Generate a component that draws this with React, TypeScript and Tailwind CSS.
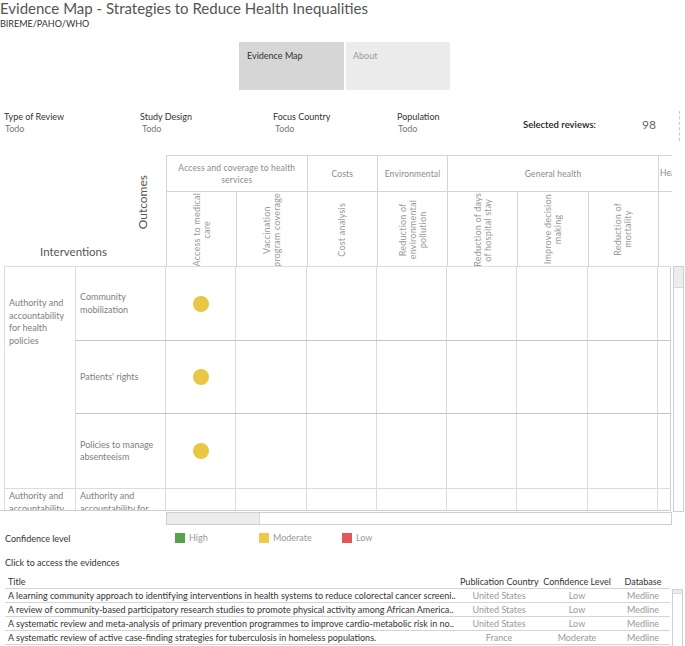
import React from "react";

const groups = [
  { label: ["Access and coverage to health", "services"], w: "w-[140.6px]" },
  { label: ["Costs"], w: "w-[70.3px]" },
  { label: ["Environmental"], w: "w-[70.3px]" },
  { label: ["General health"], w: "w-[210.9px]" },
];

const outcomes = [
  ["Access to medical", "care"],
  ["Vaccination", "program coverage"],
  ["Cost analysis"],
  ["Reduction of", "environmental", "pollution"],
  ["Reduction of days", "of hospital stay"],
  ["Improve decision", "making"],
  ["Reduction of", "mortality"],
];

const rows = [
  { label: ["Community", "mobilization"], h: "h-[74px]" },
  { label: ["Patients' rights"], h: "h-[73px]" },
  { label: ["Policies to manage", "absenteeism"], h: "h-[74px]" },
];

const evidences = [
  {
    title:
      "A learning community approach to identifying interventions in health systems to reduce colorectal cancer screeni..",
    country: "United States",
    level: "Low",
  },
  {
    title:
      "A review of community-based participatory research studies to promote physical activity among African America..",
    country: "United States",
    level: "Low",
  },
  {
    title:
      "A systematic review and meta-analysis of primary prevention programmes to improve cardio-metabolic risk in no..",
    country: "United States",
    level: "Low",
  },
  {
    title:
      "A systematic review of active case-finding strategies for tuberculosis in homeless populations.",
    country: "France",
    level: "Moderate",
  },
];

const DataCells = ({ dot }: { dot?: boolean }) => (
  <>
    {outcomes.map((_, i) => (
      <div
        key={i}
        className="flex w-[70.3px] shrink-0 items-center justify-center border-r border-[#dcdcdc]"
      >
        {dot && i === 0 && <div className="h-4 w-4 rounded-full bg-[#eac645]" />}
      </div>
    ))}
    <div className="w-[13px] shrink-0 border-r border-[#cfcfcf]" />
  </>
);

const App = () => {
  return (
    <div className="h-[646px] w-[685px] overflow-hidden bg-white font-['Lato',sans-serif] text-[#333]">
      {/* title */}
      <div>
        <h1 className="text-[15px] leading-[16px] text-[#555]">
          Evidence Map - Strategies to Reduce Health Inequalities
        </h1>
        <p className="mt-[2px] text-[9px] leading-[11px] text-[#333]">BIREME/PAHO/WHO</p>
      </div>

      {/* tabs */}
      <div className="mt-[13px] flex pl-[239px]">
        <div className="h-[48px] w-[105px] bg-[#d6d6d6] pl-[8px] pt-[7px] text-[9px] text-[#333]">
          Evidence Map
        </div>
        <div className="ml-[2px] h-[48px] w-[104px] bg-[#ececec] pl-[7px] pt-[7px] text-[9px] text-[#999]">
          About
        </div>
      </div>

      {/* filters */}
      <div className="mt-[21px] flex h-[30px] items-start text-[9px] leading-[12px]">
        <div className="w-[140px] pl-[4px]">
          <div>Type of Review</div>
          <div className="pl-[1px] text-[#777]">Todo</div>
        </div>
        <div className="w-[133px]">
          <div>Study Design</div>
          <div className="pl-[2px] text-[#777]">Todo</div>
        </div>
        <div className="w-[124px]">
          <div>Focus Country</div>
          <div className="pl-[2px] text-[#777]">Todo</div>
        </div>
        <div className="w-[126px]">
          <div>Population</div>
          <div className="pl-[1px] text-[#777]">Todo</div>
        </div>
        <div className="flex w-[156px] items-center pt-[8px]">
          <span className="w-[119px] text-[9.5px] font-semibold text-[#222]">Selected reviews:</span>
          <span className="text-[12px] text-[#666]">98</span>
        </div>
        <div className="h-[30px] border-l border-dashed border-[#f3b8c0]" />
      </div>

      {/* matrix header */}
      <div className="mt-[14px] flex h-[111px]">
        <div className="flex w-[166px] shrink-0 flex-col">
          <div className="flex h-[85px] items-center justify-end pr-[16px] pt-[10px]">
            <span className="rotate-180 text-[12px] leading-[14px] text-[#555] [writing-mode:vertical-rl]">
              Outcomes
            </span>
          </div>
          <div className="pl-[40px] text-[11.5px] leading-[24px] text-[#555]">Interventions</div>
        </div>
        <div className="w-[506px] shrink-0 overflow-hidden border-l border-t border-[#d4d4d4]">
          <div className="flex h-[36px] border-b border-[#d4d4d4]">
            {groups.map((g) => (
              <div
                key={g.label[0]}
                className={`${g.w} flex shrink-0 flex-col items-center justify-center border-r border-[#d4d4d4] text-center text-[8.5px] leading-[12px] tracking-[0.15px] text-[#8a8a8a]`}
              >
                {g.label.map((l) => (
                  <span key={l}>{l}</span>
                ))}
              </div>
            ))}
            <div className="w-[14px] shrink-0 overflow-hidden whitespace-nowrap pl-[1px] pt-[11px] text-[8.5px] text-[#8a8a8a]">
              Health
            </div>
          </div>
          <div className="flex h-[75px]">
            {outcomes.map((o) => (
              <div
                key={o.join(" ")}
                className="flex w-[70.3px] shrink-0 items-center justify-center border-r border-[#d4d4d4]"
              >
                <div className="rotate-180 whitespace-nowrap text-center text-[9px] leading-[10px] tracking-[0.2px] text-[#999] [writing-mode:vertical-rl]">
                  {o.map((l) => (
                    <div key={l}>{l}</div>
                  ))}
                </div>
              </div>
            ))}
          </div>
        </div>
      </div>

      {/* matrix body */}
      <div className="flex">
        <div className="h-[245px] w-[671px] shrink-0 overflow-hidden border-b border-[#cfcfcf] pl-[4px] text-[9px] leading-[12.5px] text-[#808080]">
          <div className="flex border-t border-[#dcdcdc]">
            <div className="w-[72px] shrink-0 border-x border-[#dcdcdc] pl-[4px] pt-[30px]">
              Authority and
              <br />
              accountability
              <br />
              for health
              <br />
              policies
            </div>
            <div className="flex flex-col">
              {rows.map((r, i) => (
                <div
                  key={i}
                  className={`${r.h} flex ${i < 2 ? "border-b border-[#c4c4c4]" : ""}`}
                >
                  <div className="flex w-[90px] shrink-0 flex-col justify-center border-r border-[#dcdcdc] pl-[4px]">
                    {r.label.map((l) => (
                      <span key={l}>{l}</span>
                    ))}
                  </div>
                  <DataCells dot />
                </div>
              ))}
            </div>
          </div>
          <div className="flex h-[24px] border-t border-[#dcdcdc]">
            <div className="w-[72px] shrink-0 border-x border-[#dcdcdc] pl-[4px] pt-[1px]">
              Authority and
              <br />
              accountability
            </div>
            <div className="w-[90px] shrink-0 border-r border-[#dcdcdc] pl-[4px] pt-[1px]">
              Authority and
              <br />
              accountability for
            </div>
            <DataCells />
          </div>
        </div>
        <div className="ml-[2px] h-[246px] w-[11px] shrink-0 border border-[#cfcfcf]">
          <div className="h-[21px] border-b border-[#d8d8d8] bg-[#ececec]" />
        </div>
      </div>

      {/* horizontal scrollbar */}
      <div className="ml-[166px] flex h-[13px] w-[506px] border border-[#cfcfcf]">
        <div className="w-[93px] border-r border-[#d8d8d8] bg-[#ececec]" />
      </div>

      {/* legend */}
      <div className="mt-[6px] flex items-center text-[9px] leading-[12px]">
        <div className="w-[175px] pl-[5px] pt-[2px] text-[#333]">Confidence level</div>
        <div className="flex w-[84px] items-center gap-[4px] text-[#999]">
          <span className="h-[10px] w-[10px] bg-[#59a14f]" />
          High
        </div>
        <div className="flex w-[83px] items-center gap-[4px] text-[#999]">
          <span className="h-[10px] w-[10px] bg-[#edc948]" />
          Moderate
        </div>
        <div className="flex items-center gap-[4px] text-[#999]">
          <span className="h-[10px] w-[10px] bg-[#e15759]" />
          Low
        </div>
      </div>

      <div className="mt-[12px] pl-[5px] text-[9px] leading-[12px] text-[#333]">
        Click to access the evidences
      </div>

      {/* evidence table */}
      <div className="mt-[7px] flex">
        <div className="w-[670px] shrink-0 pl-[5px] text-[9px]">
          <div className="flex h-[13px] items-center whitespace-nowrap border-b border-[#d4d4d4] text-[#333]">
            <div className="w-[455px] pl-[3px]">Title</div>
            <div className="w-[78px] text-center">Publication Country</div>
            <div className="w-[78px] text-center">Confidence Level</div>
            <div className="w-[54px] text-center">Database</div>
          </div>
          {evidences.map((e) => (
            <div key={e.title} className="flex h-[14px] items-center whitespace-nowrap border-b border-[#d4d4d4]">
              <div className="w-[455px] overflow-hidden pl-[3px] text-[#333]">{e.title}</div>
              <div className="w-[78px] text-center text-[#999]">{e.country}</div>
              <div className="w-[78px] text-center text-[#999]">{e.level}</div>
              <div className="w-[54px] text-center text-[#999]">Medline</div>
            </div>
          ))}
        </div>
        <div className="ml-[2px] mt-[13px] h-[60px] w-[11px] shrink-0 border border-[#cfcfcf]">
          <div className="h-[4px] border-b border-[#d8d8d8] bg-[#ececec]" />
        </div>
      </div>
    </div>
  );
};

export default App;
